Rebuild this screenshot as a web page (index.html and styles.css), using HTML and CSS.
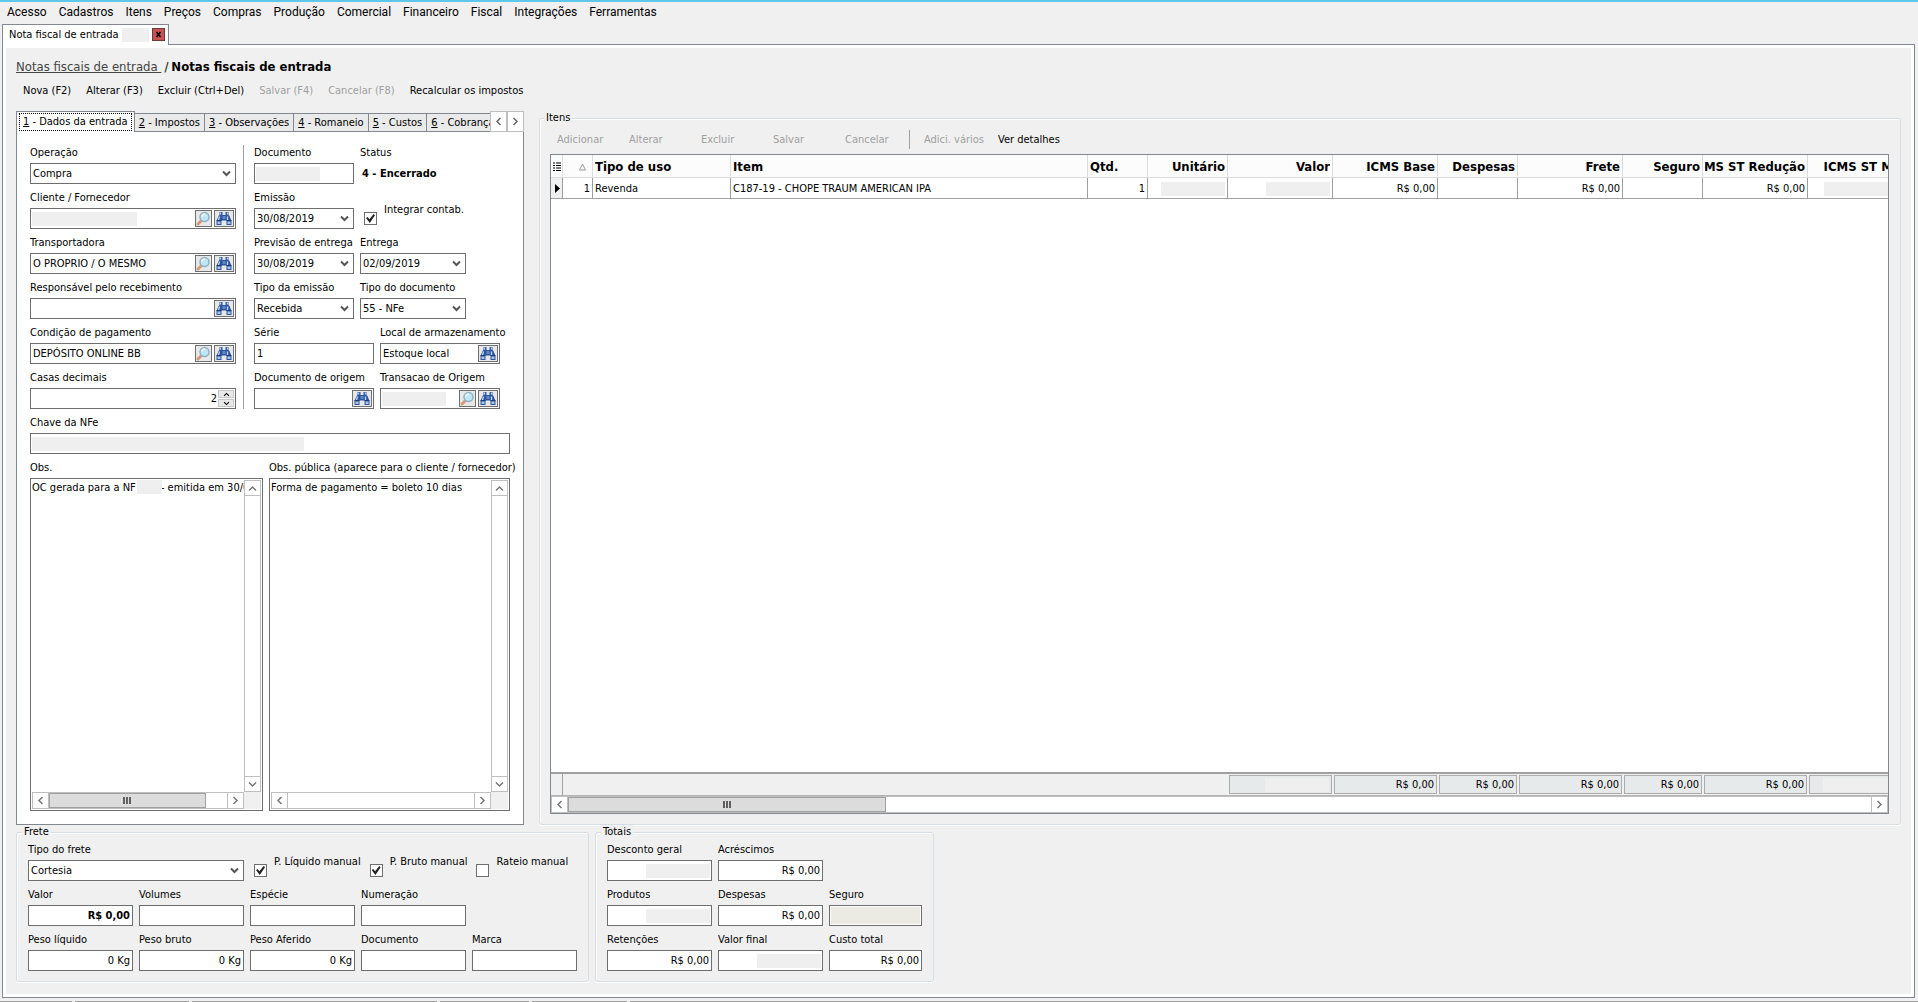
FILE: index.html
```html
<!DOCTYPE html>
<html lang="pt-BR">
<head>
  <meta charset="UTF-8" />
  <meta name="viewport" content="width=device-width, initial-scale=1.0" />
  <title>Nota fiscal de entrada</title>
  <link rel="stylesheet" href="styles.css">
</head>
<body>
  <!-- Ícones -->
  <svg class="sprite" width="0" height="0">
    <symbol id="lupa" viewBox="0 0 15 15">
      <path d="M5.5 9.5 2 13" stroke="#d39a78" stroke-width="3" stroke-linecap="round" />
      <circle cx="8.500" cy="6" r="4.500" fill="#bfe6f5" stroke="#8fb2c4" stroke-width="1.500" />
      <path d="M5.800 5.500A3 3 0 0 1 9 3.200" stroke="#fff" stroke-width="1.500" fill="none" />
    </symbol>
    <symbol id="binoculo" viewBox="0 0 16 15">
      <path d="M3.500 1h3v3h3V1h3v3l1 1 2 5v4h-5V9.500h-5V14h-5v-4l2-5 1-1z" fill="#2f57a0" />
      <path d="M6.500 5h3v3h-3z" fill="#5f86c6" />
      <path d="M4.500 1.500v2M11.500 1.500v2M3.500 5.500 2.500 9M11.500 5.500v3.500" stroke="#c3d8f4" stroke-width="1.300" />
      <path d="M1.500 10.500h3V13h-3zM11.500 10.500h3V13h-3z" fill="#a9c4ea" />
      <path d="M.5 9.500h5M10.500 9.500h5" stroke="#1d3c7c" />
    </symbol>
    <symbol id="seta" viewBox="0 0 9 7">
      <path d="M1 1.500 4.500 5 8 1.500" fill="none" stroke="currentColor" stroke-width="2" />
    </symbol>
    <symbol id="esq" viewBox="0 0 7 9"><path d="M5.500 1 2 4.500 5.500 8" fill="none" stroke="currentColor" stroke-width="1.500" /></symbol>
    <symbol id="dir" viewBox="0 0 7 9"><path d="M1.500 1 5 4.500 1.500 8" fill="none" stroke="currentColor" stroke-width="1.500" /></symbol>
    <symbol id="cima" viewBox="0 0 9 7"><path d="M1 5.500 4.500 2 8 5.500" fill="none" stroke="currentColor" stroke-width="1.500" /></symbol>
    <symbol id="baixo" viewBox="0 0 9 7"><path d="M1 1.500 4.500 5 8 1.500" fill="none" stroke="currentColor" stroke-width="1.500" /></symbol>
  </svg>

  <nav class="menu">
    <a href="#">Acesso</a>
    <a href="#">Cadastros</a>
    <a href="#">Itens</a>
    <a href="#">Preços</a>
    <a href="#">Compras</a>
    <a href="#">Produção</a>
    <a href="#">Comercial</a>
    <a href="#">Financeiro</a>
    <a href="#">Fiscal</a>
    <a href="#">Integrações</a>
    <a href="#">Ferramentas</a>
  </nav>

  <div class="window-tab">
    <span>Nota fiscal de entrada</span>
    <span class="mask w27"></span>
    <button class="close" aria-label="Fechar"><svg width="7" height="7" viewBox="0 0 7 7"><path d="M1.500 1l4 5M5.500 1l-4 5" stroke="#000" stroke-width="1.500" /></svg></button>
  </div>

  <main class="frame">
    <div class="content">
      <div class="breadcrumb"><a href="#">Notas fiscais de entrada&nbsp;</a><span>/</span><b>Notas fiscais de entrada</b></div>
      <div class="toolbar">
        <button>Nova (F2)</button>
        <button>Alterar (F3)</button>
        <button>Excluir (Ctrl+Del)</button>
        <button disabled>Salvar (F4)</button>
        <button disabled>Cancelar (F8)</button>
        <button>Recalcular os impostos</button>
      </div>

      <div class="main-row">
        <section class="entry">
          <div class="tabs">
            <div class="tab-list">
              <button class="tab active"><span><u>1</u> - Dados da entrada</span></button>
              <button class="tab"><u>2</u> - Impostos</button>
              <button class="tab"><u>3</u> - Observações</button>
              <button class="tab"><u>4</u> - Romaneio</button>
              <button class="tab"><u>5</u> - Custos</button>
              <button class="tab"><u>6</u> - Cobrança</button>
            </div>
            <button class="tab-nav" aria-label="Anterior"><svg width="7" height="9"><use href="#esq" /></svg></button>
            <button class="tab-nav" aria-label="Próxima"><svg width="7" height="9"><use href="#dir" /></svg></button>
          </div>

          <div class="tab-panel">
            <div class="columns">
              <div class="col-left">
                <div class="field">
                  <label for="operacao">Operação</label>
                  <div class="box combo"><select id="operacao"><option>Compra</option></select><svg width="9" height="7"><use href="#seta" /></svg></div>
                </div>
                <div class="field">
                  <label for="cliente">Cliente / Fornecedor</label>
                  <div class="box"><span class="mask w105"></span><input id="cliente" type="text"><button class="icon lupa" aria-label="Ver"><svg width="15" height="15"><use href="#lupa" /></svg></button><button class="icon" aria-label="Procurar"><svg width="16" height="15"><use href="#binoculo" /></svg></button></div>
                </div>
                <div class="field">
                  <label for="transportadora">Transportadora</label>
                  <div class="box"><input id="transportadora" type="text" value="O PROPRIO / O MESMO"><button class="icon lupa" aria-label="Ver"><svg width="15" height="15"><use href="#lupa" /></svg></button><button class="icon" aria-label="Procurar"><svg width="16" height="15"><use href="#binoculo" /></svg></button></div>
                </div>
                <div class="field">
                  <label for="responsavel">Responsável pelo recebimento</label>
                  <div class="box"><input id="responsavel" type="text"><button class="icon" aria-label="Procurar"><svg width="16" height="15"><use href="#binoculo" /></svg></button></div>
                </div>
                <div class="field">
                  <label for="condicao">Condição de pagamento</label>
                  <div class="box"><input id="condicao" type="text" value="DEPÓSITO ONLINE BB"><button class="icon lupa" aria-label="Ver"><svg width="15" height="15"><use href="#lupa" /></svg></button><button class="icon" aria-label="Procurar"><svg width="16" height="15"><use href="#binoculo" /></svg></button></div>
                </div>
                <div class="field">
                  <label for="casas">Casas decimais</label>
                  <div class="box"><input id="casas" class="right" type="text" value="2"><div class="spin"><button aria-label="Mais"><svg width="7" height="5" viewBox="0 0 9 7"><use href="#cima" /></svg></button><button aria-label="Menos"><svg width="7" height="5" viewBox="0 0 9 7"><use href="#baixo" /></svg></button></div></div>
                </div>
              </div>

              <div class="col-right">
                <div class="row">
                  <div class="field w100">
                    <label for="documento">Documento</label>
                    <div class="box"><span class="mask w64"></span><input id="documento" type="text"></div>
                  </div>
                  <div class="field">
                    <span class="label">Status</span>
                    <b class="status">4 - Encerrado</b>
                  </div>
                </div>
                <div class="row">
                  <div class="field w100">
                    <label for="emissao">Emissão</label>
                    <div class="box combo"><input id="emissao" type="text" value="30/08/2019"><svg width="9" height="7"><use href="#seta" /></svg></div>
                  </div>
                  <div class="check"><input id="integrar" type="checkbox" checked><label for="integrar">Integrar contab.</label></div>
                </div>
                <div class="row">
                  <div class="field w100">
                    <label for="previsao">Previsão de entrega</label>
                    <div class="box combo"><input id="previsao" type="text" value="30/08/2019"><svg width="9" height="7"><use href="#seta" /></svg></div>
                  </div>
                  <div class="field w106">
                    <label for="entrega">Entrega</label>
                    <div class="box combo"><input id="entrega" type="text" value="02/09/2019"><svg width="9" height="7"><use href="#seta" /></svg></div>
                  </div>
                </div>
                <div class="row">
                  <div class="field w100">
                    <label for="tipoEmissao">Tipo da emissão</label>
                    <div class="box combo"><select id="tipoEmissao"><option>Recebida</option></select><svg width="9" height="7"><use href="#seta" /></svg></div>
                  </div>
                  <div class="field w106">
                    <label for="tipoDocumento">Tipo do documento</label>
                    <div class="box combo"><select id="tipoDocumento"><option>55 - NFe</option></select><svg width="9" height="7"><use href="#seta" /></svg></div>
                  </div>
                </div>
                <div class="row">
                  <div class="field w120">
                    <label for="serie">Série</label>
                    <div class="box"><input id="serie" type="text" value="1"></div>
                  </div>
                  <div class="field w120">
                    <label for="local">Local de armazenamento</label>
                    <div class="box"><input id="local" type="text" value="Estoque local"><button class="icon" aria-label="Procurar"><svg width="16" height="15"><use href="#binoculo" /></svg></button></div>
                  </div>
                </div>
                <div class="row">
                  <div class="field w120">
                    <label for="docOrigem">Documento de origem</label>
                    <div class="box"><input id="docOrigem" type="text"><button class="icon" aria-label="Procurar"><svg width="16" height="15"><use href="#binoculo" /></svg></button></div>
                  </div>
                  <div class="field w120">
                    <label for="transOrigem">Transacao de Origem</label>
                    <div class="box"><span class="mask w64"></span><input id="transOrigem" type="text"><button class="icon lupa" aria-label="Ver"><svg width="15" height="15"><use href="#lupa" /></svg></button><button class="icon" aria-label="Procurar"><svg width="16" height="15"><use href="#binoculo" /></svg></button></div>
                  </div>
                </div>
              </div>
            </div>

            <div class="field">
              <label for="chave">Chave da NFe</label>
              <div class="box"><span class="mask w272"></span><input id="chave" type="text"></div>
            </div>

            <div class="notes">
              <div class="field note">
                <label for="obs">Obs.</label>
                <div class="memo">
                  <textarea id="obs">OC gerada para a NF &nbsp; &nbsp; &nbsp; &nbsp;- emitida em 30/08/2019</textarea>
                  <span class="mask memo-mask"></span>
                  <div class="vbar"><button aria-label="Subir"><svg width="9" height="7"><use href="#cima" /></svg></button><button aria-label="Descer"><svg width="9" height="7"><use href="#baixo" /></svg></button></div>
                  <div class="hbar"><button aria-label="Esquerda"><svg width="7" height="9"><use href="#esq" /></svg></button><div class="track"><div class="thumb"><i></i></div></div><button aria-label="Direita"><svg width="7" height="9"><use href="#dir" /></svg></button></div>
                </div>
              </div>
              <div class="field note-wide">
                <label for="obsPublica">Obs. pública (aparece para o cliente / fornecedor)</label>
                <div class="memo">
                  <textarea id="obsPublica">Forma de pagamento = boleto 10 dias</textarea>
                  <div class="vbar"><button aria-label="Subir"><svg width="9" height="7"><use href="#cima" /></svg></button><button aria-label="Descer"><svg width="9" height="7"><use href="#baixo" /></svg></button></div>
                  <div class="hbar"><button aria-label="Esquerda"><svg width="7" height="9"><use href="#esq" /></svg></button><div class="track"></div><button aria-label="Direita"><svg width="7" height="9"><use href="#dir" /></svg></button></div>
                </div>
              </div>
            </div>
          </div>
        </section>

        <fieldset class="group items">
          <legend>Itens</legend>
          <div class="items-toolbar">
            <div class="edit-buttons">
              <button disabled>Adicionar</button>
              <button disabled>Alterar</button>
              <button disabled>Excluir</button>
              <button disabled>Salvar</button>
              <button disabled>Cancelar</button>
            </div>
            <div class="extra-buttons">
              <button disabled>Adici. vários</button>
              <button>Ver detalhes</button>
            </div>
          </div>
          <div class="grid">
            <div class="grid-view">
              <table>
                <colgroup>
                  <col class="c12"><col class="c30"><col class="c138"><col class="c357"><col class="c60"><col class="c80"><col class="c105"><col class="c105"><col class="c80"><col class="c105"><col class="c80"><col class="c105"><col class="c105">
                </colgroup>
                <thead>
                  <tr>
                    <th><svg width="8" height="10" viewBox="0 0 8 10"><path d="M0 1h2M0 3.500h2M0 6h2M0 8.500h2M3 1h5M3 3.500h5M3 6h5M3 8.500h5" stroke="#000" /></svg></th>
                    <th><span class="num sort"><svg width="7" height="8" viewBox="0 0 7 8"><path d="M3.500 1 6.500 7h-6z" fill="none" stroke="#999" /></svg></span></th>
                    <th><span>Tipo de uso</span></th>
                    <th><span>Item</span></th>
                    <th><span>Qtd.</span></th>
                    <th><span class="num">Unitário</span></th>
                    <th><span class="num">Valor</span></th>
                    <th><span class="num">ICMS Base</span></th>
                    <th><span class="num">Despesas</span></th>
                    <th><span class="num">Frete</span></th>
                    <th><span class="num">Seguro</span></th>
                    <th><span class="num">ICMS ST Redução</span></th>
                    <th><span class="num">ICMS ST MVA</span></th>
                  </tr>
                </thead>
                <tbody>
                  <tr class="line">
                    <td class="marker"><svg width="5" height="9" viewBox="0 0 5 9"><path d="M0 0l5 4.500L0 9z" /></svg></td>
                    <td class="right">1</td>
                    <td>Revenda</td>
                    <td>C187-19 - CHOPE TRAUM AMERICAN IPA</td>
                    <td class="right">1</td>
                    <td class="right"><span class="mask w64"></span></td>
                    <td class="right"><span class="mask w64"></span></td>
                    <td class="right">R$ 0,00</td>
                    <td></td>
                    <td class="right">R$ 0,00</td>
                    <td></td>
                    <td class="right">R$ 0,00</td>
                    <td class="right"><span class="mask w86"></span></td>
                  </tr>
                  <tr class="blank"><td colspan="13"></td></tr>
                </tbody>
                <tfoot>
                  <tr>
                    <td class="foot-mark"></td>
                    <td colspan="5"></td>
                    <td><div class="sum"><span class="mask w64"></span></div></td>
                    <td><div class="sum">R$ 0,00</div></td>
                    <td><div class="sum">R$ 0,00</div></td>
                    <td><div class="sum">R$ 0,00</div></td>
                    <td><div class="sum">R$ 0,00</div></td>
                    <td><div class="sum">R$ 0,00</div></td>
                    <td><div class="sum"><span class="mask w86"></span></div></td>
                  </tr>
                </tfoot>
              </table>
            </div>
            <div class="hbar grid-bar"><button aria-label="Esquerda"><svg width="7" height="9"><use href="#esq" /></svg></button><div class="track"><div class="thumb"><i></i></div></div><button aria-label="Direita"><svg width="7" height="9"><use href="#dir" /></svg></button></div>
          </div>
        </fieldset>
      </div>

      <div class="bottom-row">
        <fieldset class="group">
          <legend>Frete</legend>
          <div class="fields">
            <div class="row">
              <div class="field w216">
                <label for="tipoFrete">Tipo do frete</label>
                <div class="box combo"><select id="tipoFrete"><option>Cortesia</option></select><svg width="9" height="7"><use href="#seta" /></svg></div>
              </div>
              <div class="check"><input id="pLiquido" type="checkbox" checked><label for="pLiquido">P. Líquido manual</label></div>
              <div class="check"><input id="pBruto" type="checkbox" checked><label for="pBruto">P. Bruto manual</label></div>
              <div class="check"><input id="rateio" type="checkbox"><label for="rateio">Rateio manual</label></div>
            </div>
            <div class="row">
              <div class="field w105"><label for="fValor">Valor</label><div class="box"><input id="fValor" class="right bold" type="text" value="R$ 0,00"></div></div>
              <div class="field w105"><label for="volumes">Volumes</label><div class="box"><input id="volumes" type="text"></div></div>
              <div class="field w105"><label for="especie">Espécie</label><div class="box"><input id="especie" type="text"></div></div>
              <div class="field w105"><label for="numeracao">Numeração</label><div class="box"><input id="numeracao" type="text"></div></div>
            </div>
            <div class="row">
              <div class="field w105"><label for="pesoLiquido">Peso líquido</label><div class="box"><input id="pesoLiquido" class="right" type="text" value="0 Kg"></div></div>
              <div class="field w105"><label for="pesoBruto">Peso bruto</label><div class="box"><input id="pesoBruto" class="right" type="text" value="0 Kg"></div></div>
              <div class="field w105"><label for="pesoAferido">Peso Aferido</label><div class="box"><input id="pesoAferido" class="right" type="text" value="0 Kg"></div></div>
              <div class="field w105"><label for="fDocumento">Documento</label><div class="box"><input id="fDocumento" type="text"></div></div>
              <div class="field w105"><label for="marca">Marca</label><div class="box"><input id="marca" type="text"></div></div>
            </div>
          </div>
        </fieldset>

        <fieldset class="group">
          <legend>Totais</legend>
          <div class="fields">
            <div class="row">
              <div class="field w105"><label for="desconto">Desconto geral</label><div class="box"><input id="desconto" type="text"><span class="mask w64"></span></div></div>
              <div class="field w105"><label for="acrescimos">Acréscimos</label><div class="box"><input id="acrescimos" class="right" type="text" value="R$ 0,00"></div></div>
            </div>
            <div class="row">
              <div class="field w105"><label for="produtos">Produtos</label><div class="box"><input id="produtos" type="text"><span class="mask w64"></span></div></div>
              <div class="field w105"><label for="despesas">Despesas</label><div class="box"><input id="despesas" class="right" type="text" value="R$ 0,00"></div></div>
              <div class="field w93"><label for="seguro">Seguro</label><div class="box off"><input id="seguro" type="text" disabled></div></div>
            </div>
            <div class="row">
              <div class="field w105"><label for="retencoes">Retenções</label><div class="box"><input id="retencoes" class="right" type="text" value="R$ 0,00"></div></div>
              <div class="field w105"><label for="valorFinal">Valor final</label><div class="box"><input id="valorFinal" type="text"><span class="mask w64"></span></div></div>
              <div class="field w93"><label for="custoTotal">Custo total</label><div class="box"><input id="custoTotal" class="right" type="text" value="R$ 0,00"></div></div>
            </div>
          </div>
        </fieldset>
      </div>
    </div>
  </main>

  <footer class="statusbar"><i></i><i></i><i></i><i></i><i></i><i></i></footer>
</body>
</html>
```
FILE: styles.css
```css
* {
  box-sizing: border-box;
}
body {
  margin: 0;
  height: 100vh;
  display: flex;
  flex-direction: column;
  overflow: hidden;
  background: #f0f0f0;
  color: #000;
  font: 11px/14px Tahoma, "DejaVu Sans Condensed", sans-serif;
}
button, input, select, textarea {
  font: inherit;
  color: inherit;
  margin: 0;
  padding: 0;
  border: 0;
  background: none;
  border-radius: 0;
  outline: 0;
}
button {
  white-space: nowrap;
}
button:disabled {
  color: #a0a0a0;
}
svg {
  display: block;
  flex: none;
}
.sprite {
  position: absolute;
}
.right {
  text-align: right;
}
.bold {
  font-weight: bold;
}

/* Menu e aba da janela */
.menu {
  display: flex;
  gap: 12px;
  height: 24px;
  padding: 2px 7px 0;
  border-top: 2px solid #5fc8ea;
  font: 12px/16px "Segoe UI", Roboto, sans-serif;
}
.menu a {
  color: #000;
  text-decoration: none;
}
.window-tab {
  display: flex;
  align-items: center;
  align-self: flex-start;
  gap: 3px;
  height: 21px;
  margin: 0 0 -1px 2px;
  padding: 0 3px 1px 6px;
  background: #fff;
  border: 1px solid #828790;
  border-bottom: 0;
  z-index: 1;
}
.close {
  display: grid;
  place-items: center;
  width: 13px;
  height: 13px;
  background: #c75050;
  border: 1px solid #6b3a3a;
}
.frame {
  flex: 1;
  min-height: 0;
  margin: 0 3px 0 2px;
  padding: 3px;
  background: #fff;
  border: 1px solid #828790;
}
.content {
  height: 100%;
  display: flex;
  flex-direction: column;
  padding: 11px 10px 12px;
  background: #f0f0f0;
}
.breadcrumb {
  display: flex;
  gap: 3px;
  font-size: 13px;
  line-height: 16px;
}
.breadcrumb a {
  color: #444;
}
.toolbar {
  display: flex;
  gap: 15px;
  padding: 9px 7px 13px;
}

/* Dados da entrada */
.main-row {
  flex: 1;
  min-height: 0;
  display: flex;
  gap: 15px;
}
.entry {
  display: flex;
  flex-direction: column;
  flex: none;
  width: 508px;
}
.tabs {
  display: flex;
  height: 21px;
  margin-bottom: -1px;
  z-index: 1;
}
.tab-list {
  flex: 1;
  display: flex;
  align-items: flex-end;
  overflow: hidden;
}
.tab {
  height: 19px;
  flex: none;
  padding: 1px 4px 0;
  background: #eaeaea;
  border: 1px solid #828790;
  border-left: 0;
}
.tab.active {
  height: 21px;
  padding: 0 2px 1px;
  background: #fff;
  border-left: 1px solid #828790;
  border-bottom: 0;
}
.tab.active span {
  display: block;
  padding: 1px 3px;
  border: 1px dotted #000;
}
.tab-nav {
  display: grid;
  place-items: center;
  width: 17px;
  background: #fff;
  border: 1px solid #bfbfbf;
  color: #666;
}
.tab-panel {
  flex: 1;
  min-height: 0;
  display: flex;
  flex-direction: column;
  gap: 6px;
  padding: 13px;
  background: #fff;
  border: 1px solid #828790;
}
.columns {
  display: flex;
}
.col-left {
  width: 213px;
  padding-right: 7px;
}
.col-right {
  padding-left: 10px;
  border-left: 1px solid #a0a0a0;
}
.col-left, .col-right, .fields {
  display: flex;
  flex-direction: column;
  gap: 6px;
}
.row {
  display: flex;
  gap: 6px;
}
.field {
  display: flex;
  flex-direction: column;
  gap: 3px;
}
.field label, .field .label {
  padding-top: 1px;
  white-space: nowrap;
}
.status {
  padding: 1px 0 0 2px;
  line-height: 20px;
}
.box {
  display: flex;
  align-items: center;
  height: 21px;
  padding: 1px;
  background: #fff;
  border: 1px solid #6e6e6e;
}
.box input {
  flex: 1;
  width: 0;
  min-width: 0;
  height: 17px;
  padding: 0 1px;
}
.combo {
  display: grid;
  grid-template-columns: 1fr;
}
.combo select, .combo input {
  grid-area: 1 / 1;
  width: 100%;
  padding: 0 1px;
  appearance: none;
}
.combo svg {
  grid-area: 1 / 1;
  justify-self: end;
  margin-right: 3px;
  color: #555;
  pointer-events: none;
}
.off {
  background: #ebebe4;
  box-shadow: inset 0 0 0 1px #fff;
}
.icon {
  display: grid;
  place-items: center;
  flex: none;
  width: 20px;
  height: 17px;
  margin-left: 2px;
  background: #e8e8e8;
  border: 1px solid #707070;
}
.icon.lupa {
  width: 17px;
}
.spin {
  display: flex;
  flex-direction: column;
  width: 16px;
  gap: 1px;
}
.spin button {
  display: grid;
  place-items: center;
  height: 8px;
  background: #e8e8e8;
  border: 1px solid #c8c8c8;
}
.check {
  display: flex;
  gap: 7px;
  padding-left: 4px;
}
.check input {
  display: grid;
  place-items: center;
  flex: none;
  width: 13px;
  height: 13px;
  margin-top: 22px;
  appearance: none;
  background: #fff;
  border: 1px solid #6e6e6e;
}
.check input:checked::before {
  content: "";
  width: 9px;
  height: 9px;
  background: #222;
  clip-path: polygon(0 45%, 18% 32%, 38% 58%, 85% 0, 100% 14%, 42% 100%);
}
.check label {
  margin-top: 13px;
  white-space: nowrap;
}
.check + .check {
  padding-left: 0;
  margin-left: 3px;
}

/* Trechos ocultos */
.mask {
  flex: none;
  display: inline-block;
  height: 14px;
  background: #efefef;
  vertical-align: middle;
}

/* Observações */
.notes {
  flex: 1;
  min-height: 0;
  display: flex;
  gap: 6px;
}
.note {
  flex: none;
  width: 233px;
}
.note-wide {
  flex: 1;
  min-width: 0;
}
.memo {
  position: relative;
  flex: 1;
  min-height: 0;
  display: grid;
  grid-template: 1fr 17px / 1fr 17px;
  padding: 1px;
  background: linear-gradient(#f0f0f0, #f0f0f0) right 1px bottom 1px / 17px 17px no-repeat #fff;
  border: 1px solid #6e6e6e;
}
.memo textarea {
  width: 100%;
  min-width: 0;
  height: 100%;
  padding: 1px 0 0;
  resize: none;
  white-space: pre;
  overflow: hidden;
}
.memo-mask {
  position: absolute;
  left: 106px;
  top: 1px;
  width: 25px;
}
.vbar, .hbar {
  display: flex;
  justify-content: space-between;
  background: #fff;
  border: 1px solid #bfbfbf;
  color: #777;
}
.vbar {
  flex-direction: column;
}
.vbar button, .hbar button {
  display: grid;
  place-items: center;
  flex: none;
  width: 15px;
  height: 15px;
}
.vbar button:first-child {
  border-bottom: 1px solid #bfbfbf;
}
.vbar button:last-child {
  border-top: 1px solid #bfbfbf;
}
.track {
  flex: 1;
  border: solid #bfbfbf;
  border-width: 0 1px;
}
.thumb {
  display: grid;
  place-items: center;
  width: 88%;
  height: 15px;
  background: #dcdcdc;
  border: 1px solid #a0a0a0;
}
.thumb i {
  width: 8px;
  height: 7px;
  background: repeating-linear-gradient(90deg, #606060 0 2px, transparent 2px 3px);
}

/* Grupos */
.group {
  min-width: 0;
  margin: 0;
  padding: 0 11px 10px;
  border: 1px solid #d5dfe5;
  border-radius: 3px;
  box-shadow: inset 1px 1px #fff, 0 1px #fff;
}
.group legend {
  height: 14px;
  margin-left: -6px;
  padding: 0 2px;
  background: #f0f0f0;
}
.fields {
  padding-top: 4px;
}
.bottom-row {
  display: flex;
  gap: 6px;
}
.bottom-row .fields {
  padding-top: 3px;
}
.items {
  flex: 1;
  display: flex;
  flex-direction: column;
  padding: 0 11px 10px 10px;
}
.items-toolbar {
  display: flex;
  align-items: center;
  height: 29px;
  flex: none;
  padding-left: 7px;
}
.edit-buttons {
  display: grid;
  grid-template-columns: repeat(4, 72px) 64px;
  justify-items: start;
}
.extra-buttons {
  display: flex;
  align-items: center;
  gap: 14px;
  height: 19px;
  padding-left: 14px;
  border-left: 1px solid #a0a0a0;
}

/* Grade de itens */
.grid {
  flex: 1;
  min-height: 0;
  display: flex;
  flex-direction: column;
  background: #fff;
  border: 1px solid #828790;
}
.grid-view {
  flex: 1;
  min-height: 0;
  overflow: hidden;
}
table {
  width: 1362px;
  height: 100%;
  table-layout: fixed;
  border-collapse: separate;
  border-spacing: 0;
}
.c12 { width: 12px; }
.c30 { width: 30px; }
.c138 { width: 138px; }
.c357 { width: 357px; }
.c60 { width: 60px; }
.c80 { width: 80px; }
.c105 { width: 105px; }
th {
  height: 23px;
  padding: 1px 2px 0;
  background: #fcfcfc;
  border-right: 1px solid #dcdcdc;
  border-bottom: 1px solid #dcdcdc;
  font-size: 13px;
  line-height: 16px;
  text-align: left;
}
th span {
  display: flex;
  align-items: center;
  overflow: hidden;
  white-space: nowrap;
}
th .num {
  justify-content: flex-end;
}
th .sort {
  padding-right: 4px;
}
td {
  padding: 0 2px;
  white-space: nowrap;
}
.line td {
  height: 21px;
  padding: 1px 2px 0;
  border-right: 1px solid #a0a0a0;
  border-bottom: 1px solid #a0a0a0;
}
.line .marker {
  padding: 0 0 0 4px;
  background: #f0f0f0;
}
tfoot td {
  height: 24px;
  padding: 0 1px;
  background: #f0f0f0;
  border-top: 2px solid #a0a0a0;
  border-bottom: 1px solid #b4b4b4;
}
.foot-mark {
  border-right: 1px solid #a0a0a0;
}
.sum {
  display: flex;
  align-items: center;
  justify-content: flex-end;
  height: 19px;
  padding: 0 2px;
  background: #e6eaea;
  border: 1px solid #acacac;
}
.grid-bar {
  height: 17px;
}
.grid-bar .thumb {
  width: 318px;
}

.w27 { width: 27px; }
.w64 { width: 64px; }
.w86 { width: 86px; }
.w93 { width: 93px; }
.w100 { width: 100px; }
.w105 { width: 105px; }
.w106 { width: 106px; }
.w120 { width: 120px; }
.w216 { width: 216px; }
.w272 { width: 272px; }

/* Barra de status */
.statusbar {
  display: grid;
  grid-template-columns: 72px 114px 245px 89px 95px 1fr;
  gap: 3px;
  padding-top: 3px;
}
.statusbar i {
  height: 1px;
  background: #a0a0a0;
}
```
